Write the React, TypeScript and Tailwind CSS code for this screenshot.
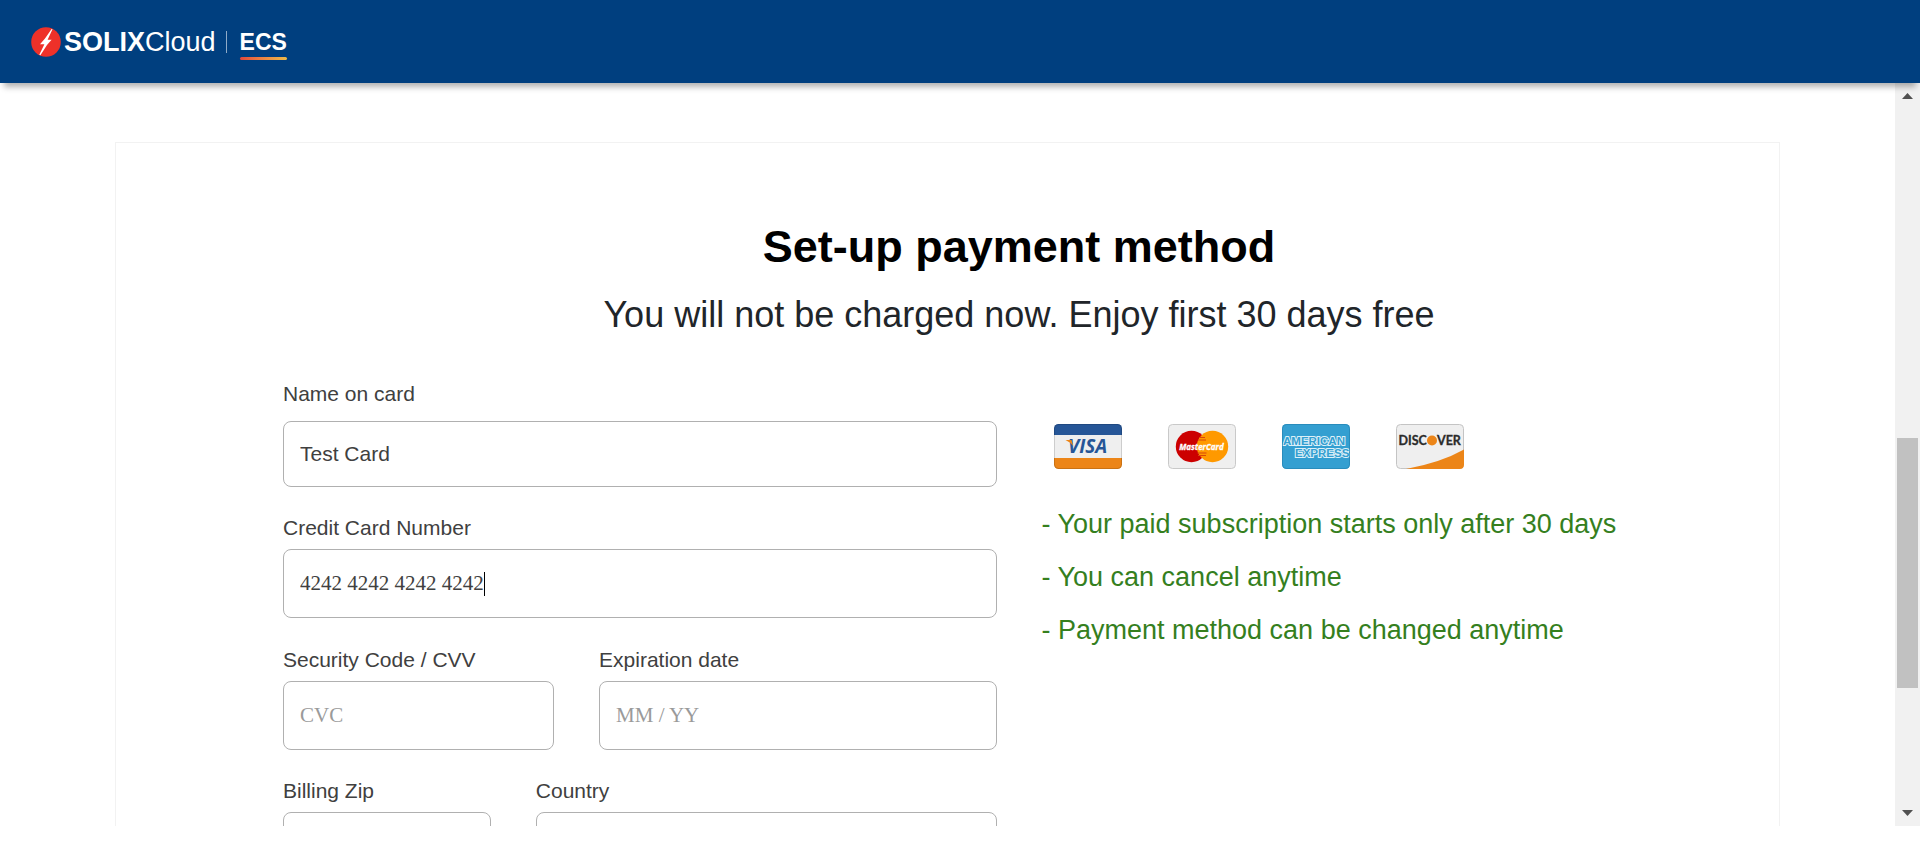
import React from "react";

const sans = "font-['Liberation_Sans',Arial,sans-serif]";
const serif = "font-['Liberation_Serif','Times_New_Roman',serif]";
const labelClass = "block text-[21px] leading-6 text-[#404040]";
const boxClass =
  "block w-full rounded-lg border border-[#b0b0b0] bg-white px-4 text-[21px] text-[#404040] outline-none placeholder:text-[#9a9a9a]";

function Logo() {
  return (
    <a href="#" aria-label="SOLIXCloud ECS" className="flex items-center text-white">
      <svg className="size-[30px]" viewBox="0 0 30 30" aria-hidden="true">
        <circle cx="15" cy="15" r="14.8" fill="#ee3129" />
        <path d="M20.6 2 L14 11.6 L9 17.2 H13.4 L8.3 27.8 L9.4 28.2 L16 18 L20.6 12.8 H16.6 L21.5 2.3 Z" fill="#fff" />
      </svg>
      <span className="ml-[3px] text-[27px] leading-8">
        <b>SOLIX</b>Cloud
      </span>
      <span className="ml-2.5 h-[22px] w-px bg-[#8fabc8]" />
      <span className="ml-[13px] flex flex-col pt-1.5">
        <b className="text-[23px] leading-6">ECS</b>
        <span className="mt-[3px] h-[3px] rounded-full bg-linear-to-r from-[#e2463c] to-[#eebb4a]" />
      </span>
    </a>
  );
}

function Visa() {
  return (
    <svg className="h-[45px] w-[68px]" viewBox="0 0 68 45" role="img" aria-label="Visa">
      <clipPath id="visa-clip">
        <rect width="68" height="45" rx="4.5" />
      </clipPath>
      <g clipPath="url(#visa-clip)">
        <rect width="68" height="45" fill="#efefef" />
        <rect width="68" height="11" fill="#265697" />
        <rect y="34" width="68" height="11" fill="#ec8518" />
      </g>
      <rect x=".5" y=".5" width="67" height="44" rx="4" fill="none" stroke="#000" strokeOpacity=".14" />
      <text x="14" y="29" fontSize="19" fontWeight="700" fontStyle="italic" fill="#265697" fontFamily="Open Sans, sans-serif">
        VISA
      </text>
      <path d="M11.5 16 H17.5 L19.2 22 Q16 18 11.5 16 Z" fill="#ec8518" />
    </svg>
  );
}

function MasterCard() {
  return (
    <svg className="h-[45px] w-[68px]" viewBox="0 0 68 45" role="img" aria-label="MasterCard">
      <rect x=".5" y=".5" width="67" height="44" rx="4" fill="#efefef" stroke="#c9c9c9" />
      <circle cx="23.5" cy="22.5" r="15.7" fill="#c00" />
      <circle cx="44.5" cy="22.5" r="15.7" fill="#f90" />
      <path d="M31 13.5H37M30 16H38M29.5 29H38.5M30 31.5H38" stroke="#d8480a" strokeWidth="1.2" />
      <text x="33.5" y="25.5" textAnchor="middle" fontSize="8" fontWeight="700" fontStyle="italic" fill="#fff" stroke="#fff" strokeWidth=".3" fontFamily="Open Sans, sans-serif">
        MasterCard
      </text>
    </svg>
  );
}

function Amex() {
  return (
    <svg className="h-[45px] w-[68px]" viewBox="0 0 68 45" role="img" aria-label="American Express">
      <clipPath id="amex-clip">
        <rect width="68" height="45" rx="4.5" />
      </clipPath>
      <g clipPath="url(#amex-clip)">
        <rect width="68" height="45" fill="#349fd1" />
        <g fill="#349fd1" stroke="#dcf0f8" strokeWidth="2" paintOrder="stroke" fontSize="11.5" fontWeight="700" fontFamily="Liberation Sans, Arial, sans-serif">
          <text x="1" y="20.5">AMERICAN</text>
          <text x="13" y="33">EXPRESS</text>
        </g>
      </g>
      <rect x=".5" y=".5" width="67" height="44" rx="4" fill="none" stroke="#2584b4" strokeOpacity=".7" />
    </svg>
  );
}

function Discover() {
  return (
    <svg className="h-[45px] w-[68px]" viewBox="0 0 68 45" role="img" aria-label="Discover">
      <rect x=".5" y=".5" width="67" height="44" rx="4" fill="#efefef" stroke="#c4c4c4" />
      <path d="M68 25.5 Q45 38.5 10 45 H63.5 Q68 45 68 40.5 Z" fill="#ec8518" />
      <g fill="#2b2b2b" stroke="#2b2b2b" strokeWidth=".3" fontSize="12.5" fontWeight="700" fontFamily="Lato, sans-serif">
        <text x="2.5" y="21">DISC</text>
        <text x="41" y="21">VER</text>
      </g>
      <circle cx="36" cy="16.5" r="5" fill="#ec8518" />
    </svg>
  );
}

function ScrollRail() {
  return (
    <div className="flex w-[25px] shrink-0 flex-col items-center bg-[#f1f1f1] px-0.5 pt-2.5 pb-2.5" aria-hidden="true">
      <svg className="h-1.5 w-[11px]" viewBox="0 0 11 6">
        <path d="M0 6 L5.5 0 L11 6 Z" fill="#505050" />
      </svg>
      <div className="flex-[339]" />
      <div className="w-full flex-[250] bg-[#c1c1c1]" />
      <div className="flex-[122]" />
      <svg className="h-1.5 w-[11px]" viewBox="0 0 11 6">
        <path d="M0 0 H11 L5.5 6 Z" fill="#505050" />
      </svg>
    </div>
  );
}

function PaymentForm() {
  return (
    <form className="grid grid-cols-12 gap-x-[45px]">
      <div className="col-span-12">
        <label htmlFor="name" className={labelClass}>Name on card</label>
        <input id="name" defaultValue="Test Card" className={`${boxClass} mt-[15px] h-[66px]`} />
      </div>
      <div className="col-span-12 mt-[29px]">
        <label htmlFor="number" className={labelClass}>Credit Card Number</label>
        <div className={`${boxClass} mt-[9px] h-[69px]`}>
          <div className="flex h-full items-center">
            <input
              id="number"
              defaultValue="4242 4242 4242 4242"
              className={`${serif} [field-sizing:content] bg-transparent outline-none`}
            />
            <span className="h-6 w-px bg-black" />
          </div>
        </div>
      </div>
      <div className="col-span-5 mt-[30px]">
        <label htmlFor="cvc" className={labelClass}>Security Code / CVV</label>
        <input id="cvc" placeholder="CVC" className={`${boxClass} ${serif} mt-[9px] h-[69px]`} />
      </div>
      <div className="col-span-7 mt-[30px]">
        <label htmlFor="expiry" className={labelClass}>Expiration date</label>
        <input id="expiry" placeholder="MM / YY" className={`${boxClass} ${serif} mt-[9px] h-[69px]`} />
      </div>
      <div className="col-span-4 mt-[29px]">
        <label htmlFor="zip" className={labelClass}>Billing Zip</label>
        <input id="zip" className={`${boxClass} mt-[9px] h-[69px]`} />
      </div>
      <div className="col-span-8 mt-[29px]">
        <label htmlFor="country" className={labelClass}>Country</label>
        <select id="country" className={`${boxClass} mt-[9px] h-[69px] appearance-none`} />
      </div>
    </form>
  );
}

export default function App() {
  return (
    <div className={`${sans} flex h-screen flex-col bg-white pb-[37px]`}>
      <header className="relative z-10 flex h-[83px] shrink-0 items-center bg-[#003f7f] px-[31px] shadow-[0_8px_6px_-4px_rgba(0,0,0,0.3)]">
        <Logo />
      </header>
      <div className="flex min-h-0 flex-1">
        <main className="min-w-0 flex-1 overflow-hidden px-[115px] pt-[59px]">
          <section className="border border-[#f2f2f2] pt-[77px] pr-6 pl-[167px]">
            <h1 className="text-center text-[45px] leading-[54px] font-bold text-black">Set-up payment method</h1>
            <h2 className="mt-[19px] text-center text-[36px] leading-[44px] text-[#212529]">
              You will not be charged now. Enjoy first 30 days free
            </h2>
            <div className="mt-[45px] grid grid-cols-2 gap-x-[45px]">
              <PaymentForm />
              <div className="pt-[42px]">
                <div className="flex gap-[46px] pl-3">
                  <Visa />
                  <MasterCard />
                  <Amex />
                  <Discover />
                </div>
                <ul className="mt-[29px] text-[27px] leading-[53px] text-[#357f1e]">
                  <li>- Your paid subscription starts only after 30 days</li>
                  <li>- You can cancel anytime</li>
                  <li>- Payment method can be changed anytime</li>
                </ul>
              </div>
            </div>
          </section>
        </main>
        <ScrollRail />
      </div>
    </div>
  );
}
